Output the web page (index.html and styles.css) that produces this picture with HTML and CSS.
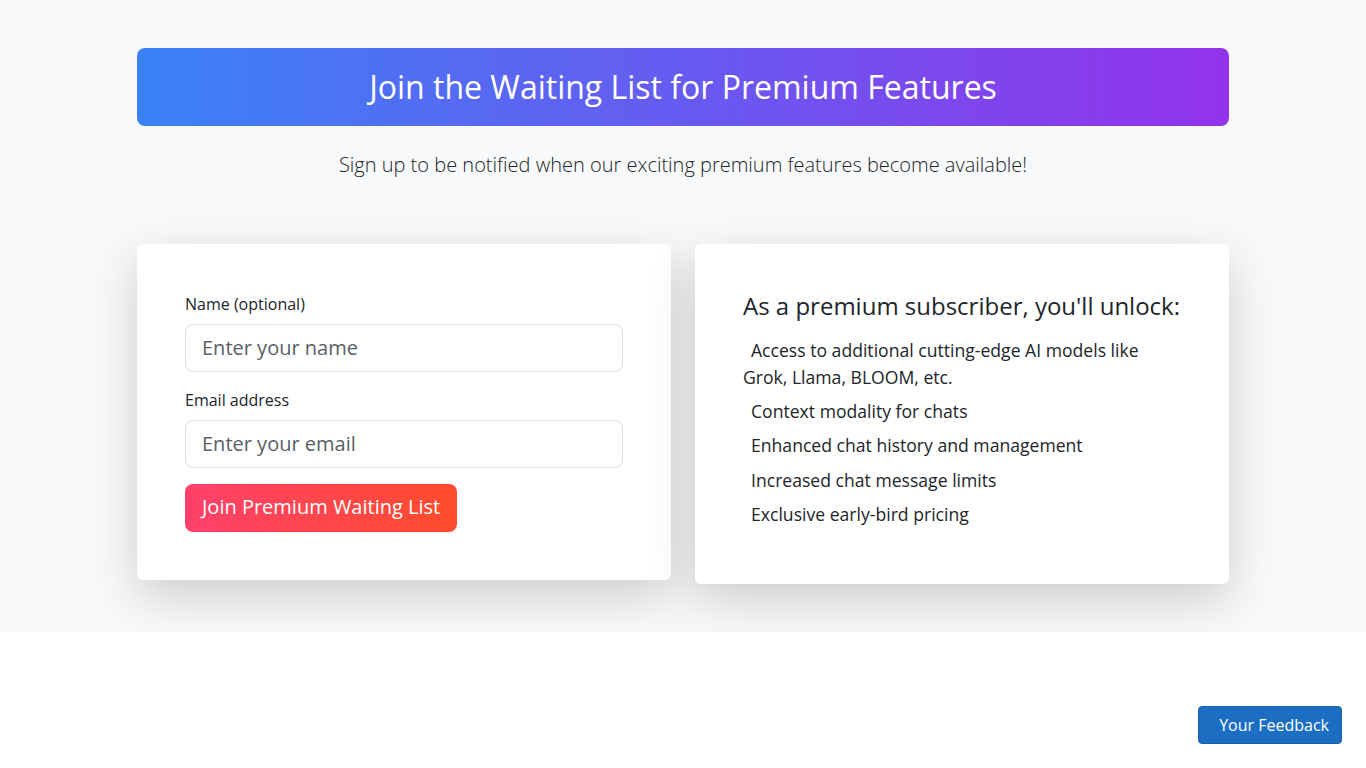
FILE: index.html
```html
<!DOCTYPE html>
<html lang="en">
<head>
<meta charset="utf-8">
<title>Premium Waiting List</title>
<link rel="stylesheet" href="styles.css">
</head>
<body>
<section class="section">
  <div class="container">
    <div class="hero">
      <h1 class="hero-title">Join the Waiting List for Premium Features</h1>
    </div>
    <p class="lead">Sign up to be notified when our exciting premium features become available!</p>
    <div class="row">
      <div class="card">
        <form class="form">
          <label class="label" for="name">Name (optional)</label>
          <input class="input" id="name" type="text" placeholder="Enter your name">
          <label class="label" for="email">Email address</label>
          <input class="input" id="email" type="email" placeholder="Enter your email">
          <button class="btn-join" type="button">Join Premium Waiting List</button>
        </form>
      </div>
      <div class="card">
        <h4 class="card-title">As a premium subscriber, you'll unlock:</h4>
        <ul class="features">
          <li><span class="ico"></span>Access to additional cutting-edge AI models like Grok, Llama, BLOOM, etc.</li>
          <li><span class="ico"></span>Context modality for chats</li>
          <li><span class="ico"></span>Enhanced chat history and management</li>
          <li><span class="ico"></span>Increased chat message limits</li>
          <li><span class="ico"></span>Exclusive early-bird pricing</li>
        </ul>
      </div>
    </div>
  </div>
</section>
<button class="feedback" type="button"><span class="ico"></span>Your Feedback</button>
</body>
</html>
```

FILE: styles.css
```css
* { box-sizing: border-box; }
html, body { margin: 0; padding: 0; }
body {
  font-family: "Open Sans", "Liberation Sans", sans-serif;
  font-size: 16px;
  line-height: 1.5;
  color: #212529;
  background: #fff;
}
.section {
  background: #f8f9fa;
  padding: 48px 0;
}
.container {
  width: 1092px;
  margin: 0 auto;
}
.hero {
  background: linear-gradient(90deg, #3b82f6, #9333ea);
  border-radius: 8px;
  padding: 20px 16px;
  text-align: center;
  margin-bottom: 24px;
}
.hero-title {
  margin: 0;
  color: #fff;
  font-size: 32px;
  font-weight: 400;
  line-height: 1.2;
}
.lead {
  margin: 0;
  text-align: center;
  font-size: 20px;
  font-weight: 300;
  line-height: 1.5;
}
.row {
  margin-top: 64px;
  display: grid;
  grid-template-columns: 1fr 1fr;
  gap: 24px;
  align-items: start;
}
.card {
  background: #fff;
  border-radius: 6px;
  padding: 48px;
  box-shadow: 0 1rem 3rem rgba(0,0,0,.175);
}
.form {
  display: flex;
  flex-direction: column;
  align-items: flex-start;
}
.label {
  display: block;
  margin-bottom: 8px;
  font-size: 16px;
  line-height: 24px;
}
.input {
  display: block;
  width: 100%;
  height: 48px;
  padding: 6px 16px 8px;
  font-family: inherit;
  font-size: 20px;
  color: #212529;
  background: #fff;
  border: 1px solid #dee2e6;
  border-radius: 8px;
  margin-bottom: 16px;
}
.input::placeholder { color: #595f65; }
.btn-join {
  height: 48px;
  padding: 0 17px 3px;
  font-family: inherit;
  font-size: 20px;
  color: #fff;
  border: 0;
  border-radius: 8px;
  background: linear-gradient(90deg, #ff416c, #ff4b2b);
}
.card-title {
  margin: 0 0 16px;
  font-size: 24px;
  font-weight: 400;
  line-height: 1.2;
}
.features {
  list-style: none;
  margin: 0;
  padding: 0;
  font-size: 17.6px;
}
.features li {
  line-height: 1.5;
  margin-bottom: 8px;
}
.ico {
  display: inline-block;
  width: 8px;
}
.feedback {
  position: fixed;
  right: 24px;
  bottom: 24px;
  height: 38px;
  padding: 0 12px 0 12px;
  font-family: inherit;
  font-size: 16px;
  color: #fff;
  background: #1b6ec2;
  border: 1px solid #1861ac;
  border-radius: 4px;
}
```
